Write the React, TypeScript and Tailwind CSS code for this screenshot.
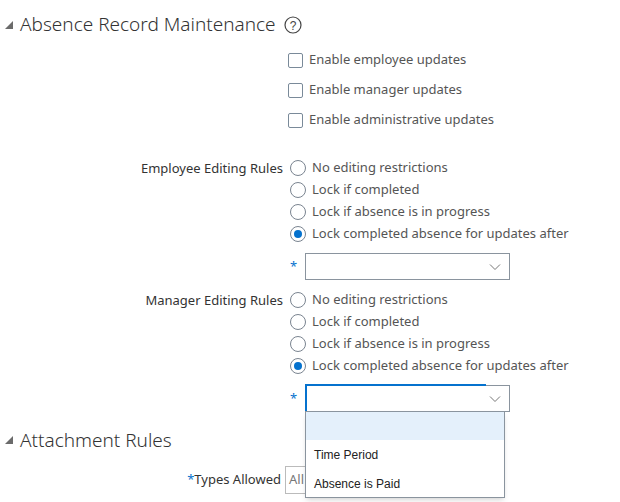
import React from "react";

const Tri = () => (
  <svg width="10" height="10" viewBox="0 0 10 10" className="mr-[6px]"><polygon points="9,1 9,9 1,9" fill="#6b6b6b" /></svg>
);

const Check = ({ label }: { label: string }) => (
  <div className="flex items-center h-[30px]">
    <div className="w-[15px] h-[15px] border border-[#7a8a99] rounded-[2px] bg-white mr-[6px]" />
    <span className="text-[13px] text-[#555]">{label}</span>
  </div>
);

const Radio = ({ label, on }: { label: string; on?: boolean }) => (
  <div className="flex items-center h-[22px]">
    <div className="w-[16px] h-[16px] rounded-full border border-[#7a8490] bg-white mr-[6px] flex items-center justify-center">
      {on && <div className="w-[8px] h-[8px] rounded-full bg-[#0572ce]" />}
    </div>
    <span className="text-[13px] text-[#555]">{label}</span>
  </div>
);

const Chevron = () => (
  <svg width="12" height="8" viewBox="0 0 12 8"><polyline points="1,1.5 6,6.5 11,1.5" fill="none" stroke="#777" strokeWidth="1" /></svg>
);

const Rules = ({ title, focused }: { title: string; focused?: boolean }) => (
  <div>
    <div className="flex">
      <div className="w-[290px] text-right pr-[7px] text-[13px] text-[#333] pt-[2px]">{title}</div>
      <div className="flex flex-col">
        <Radio label="No editing restrictions" />
        <Radio label="Lock if completed" />
        <Radio label="Lock if absence is in progress" />
        <Radio label="Lock completed absence for updates after" on />
      </div>
    </div>
    <div className="flex items-center mt-[8px] pl-[290px]">
      <span className="text-[#0572ce] text-[13px] w-[15px]">*</span>
      <div className={"relative w-[205px] h-[27px] border bg-white flex items-center justify-end pr-[8px] " + (focused ? "border-[#8a949e] border-l-[#0572ce] border-l-2" : "border-[#8a949e]")}>
        {focused && <div className="absolute left-[-2px] top-[-2px] w-[181px] h-[2px] bg-[#0572ce]" />}
        <Chevron />
      </div>
    </div>
  </div>
);

export default function App() {
  return (
    <div className="relative w-[620px] h-[502px] bg-white overflow-hidden" style={{ fontFamily: '"Noto Sans", "Open Sans", sans-serif' }}>
      <div className="flex items-center pl-[4px] pt-[13px] h-[36px]">
        <Tri />
        <span className="text-[19px] text-[#333] font-light">Absence Record Maintenance</span>
        <svg width="18" height="18" viewBox="0 0 18 18" className="ml-[8px]">
          <circle cx="9" cy="9" r="8" fill="none" stroke="#444" strokeWidth="1.2" />
          <text x="9" y="13.5" textAnchor="middle" fontSize="12" fill="#444" fontFamily="Liberation Sans">?</text>
        </svg>
      </div>
      <div className="pl-[288px] pt-[9px]">
        <Check label="Enable employee updates" />
        <Check label="Enable manager updates" />
        <Check label="Enable administrative updates" />
      </div>
      <div className="mt-[22px]">
        <Rules title="Employee Editing Rules" />
      </div>
      <div className="mt-[9px]">
        <Rules title="Manager Editing Rules" focused />
      </div>
      <div className="flex items-center pl-[4px] mt-[15px] h-[26px]">
        <Tri />
        <span className="text-[19px] text-[#333] font-light">Attachment Rules</span>
      </div>
      <div className="flex items-center mt-[13px]">
        <div className="w-[285px] text-right pr-[4px] text-[13px] text-[#333]"><span className="text-[#0572ce]">*</span>Types Allowed</div>
        <div className="w-[120px] h-[28px] border border-[#bbb] flex items-center pl-[3px] text-[13px] text-[#777]">All</div>
      </div>
      <div className="absolute left-[305px] top-[411px] w-[200px] h-[87px] bg-white border border-[#8a949e] shadow-md" style={{ fontFamily: '"Liberation Sans", Arial, sans-serif' }}>
        <div className="h-[28px] bg-[#e4f0fb]" />
        <div className="h-[29px] flex items-center pl-[8px] text-[12px] text-[#222]">Time Period</div>
        <div className="h-[29px] flex items-center pl-[8px] text-[12px] text-[#222]">Absence is Paid</div>
      </div>
    </div>
  );
}
